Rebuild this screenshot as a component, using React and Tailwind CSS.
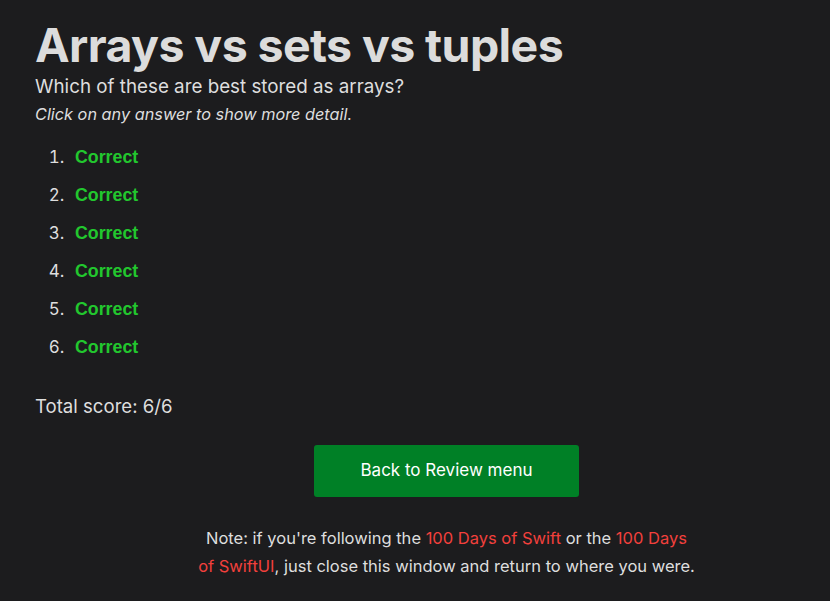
export default function App() {
  const items = [1, 2, 3, 4, 5, 6];
  return (
    <div className="min-h-[601px] w-[830px] overflow-hidden bg-[#1c1c1e] text-[#dedede]" style={{ fontFamily: "Inter, 'Liberation Sans', sans-serif" }}>
      <div className="ml-[35px] w-[823px] pt-[18px]">
        <h1 className="text-[46.5px] font-bold leading-[54px] tracking-[-0.6px] text-[#dcdcdc]">Arrays vs sets vs tuples</h1>
        <p className="mt-[2px] text-[18.8px] leading-[26px]">Which of these are best stored as arrays?</p>
        <p className="mt-[2px] text-[16.3px] italic leading-[24px]">Click on any answer to show more detail.</p>
        <ol className="mt-[19px] list-decimal pl-[34px] text-[17px]">
          {items.map((i) => (
            <li key={i} className="h-[38px] pl-[6px] leading-[24px] marker:text-[#dedede]">
              <span className="text-[17.8px] font-bold text-[#22c72e]" style={{ fontFamily: "'Liberation Sans', Arial, sans-serif" }}>Correct</span>
            </li>
          ))}
        </ol>
        <p className="mt-[20px] text-[18.6px] leading-[26px]">Total score: 6/6</p>
        <div className="mt-[26px] flex justify-center">
          <button className="h-[52px] w-[265px] rounded-[3px] bg-[#008026] text-[17px] text-white">Back to Review menu</button>
        </div>
        <p className="mx-auto mt-[27px] w-[520px] text-center text-[16.5px] leading-[28px]">
          Note: if you're following the <span className="text-[#f2403c]">100 Days of Swift</span> or the <span className="text-[#f2403c]">100 Days</span>
          <br />
          <span className="text-[#f2403c]">of SwiftUI</span>, just close this window and return to where you were.
        </p>
      </div>
    </div>
  );
}
